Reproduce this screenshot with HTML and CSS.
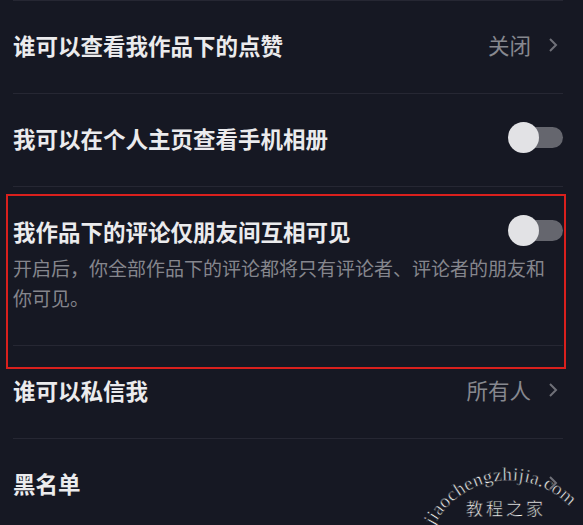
FILE: index.html
```html
<!DOCTYPE html>
<html lang="zh-CN">
<head>
    <meta charset="UTF-8">
    <meta name="viewport" content="width=device-width, initial-scale=1.0">
    <title>隐私设置</title>
    <link rel="stylesheet" href="styles.css">
</head>
<body>
    <div class="settings-list">
        <div class="setting-row">
            <span class="setting-title">谁可以查看我作品下的点赞</span>
            <span class="setting-value">关闭
                <svg class="chevron" viewBox="0 0 10 16"><polyline points="2,2 8,8 2,14"/></svg>
            </span>
        </div>

        <div class="setting-row">
            <span class="setting-title">我可以在个人主页查看手机相册</span>
            <span class="switch"></span>
        </div>

        <div class="setting-row tall">
            <div class="setting-head">
                <span class="setting-title">我作品下的评论仅朋友间互相可见</span>
                <span class="switch"></span>
            </div>
            <p class="setting-desc">开启后，你全部作品下的评论都将只有评论者、评论者的朋友和你可见。</p>
        </div>

        <div class="setting-row">
            <span class="setting-title">谁可以私信我</span>
            <span class="setting-value">所有人
                <svg class="chevron" viewBox="0 0 10 16"><polyline points="2,2 8,8 2,14"/></svg>
            </span>
        </div>

        <div class="setting-row">
            <span class="setting-title">黑名单</span>
            <span class="setting-value">
                <svg class="chevron" viewBox="0 0 10 16"><polyline points="2,2 8,8 2,14"/></svg>
            </span>
        </div>
    </div>

    <!-- annotation box -->
    <div class="highlight-box"></div>

    <!-- watermark -->
    <svg class="watermark" viewBox="0 0 170 80">
        <defs>
            <path id="arc" d="M 14 76 A 84 84 0 0 1 160 70"/>
        </defs>
        <text class="wm-latin"><textPath href="#arc" textLength="160" lengthAdjust="spacing">jiaochengzhijia.com</textPath></text>
        <text class="wm-cn" x="46" y="65">教程之家</text>
    </svg>
</body>
</html>
```

FILE: styles.css
```css
* {
    margin: 0;
    padding: 0;
    box-sizing: border-box;
}

body {
    background: #161823;
    width: 583px;
    height: 525px;
    overflow: hidden;
    position: relative;
    font-family: 'Noto Sans CJK SC', 'Noto Sans', sans-serif;
}

.settings-list {
    padding: 0 20px 0 13px;
}

.setting-row {
    display: flex;
    align-items: center;
    justify-content: space-between;
    height: 93px;
    padding-bottom: 5px;
    border-top: 1px solid #262733;
}

.setting-row.tall {
    display: block;
    height: 159px;
    padding-top: 28px;
    padding-bottom: 0;
}

.setting-head {
    display: flex;
    align-items: center;
    justify-content: space-between;
}

.setting-title {
    color: #ebebed;
    font-size: 22.5px;
    font-weight: 700;
    line-height: 30px;
}

.setting-desc {
    margin-top: 7px;
    color: #85868d;
    font-size: 19px;
    line-height: 30px;
    padding-right: 8px;
}

.setting-value {
    display: flex;
    align-items: center;
    gap: 17px;
    color: #87888f;
    font-size: 21.5px;
    line-height: 30px;
    padding-right: 5px;
}

.chevron {
    width: 10px;
    height: 16px;
    fill: none;
    stroke: #6f7078;
    stroke-width: 2;
}

/* toggle (off state) */
.switch {
    position: relative;
    width: 55px;
    height: 31px;
}

.switch::before {
    content: '';
    position: absolute;
    left: 6px;
    right: 0;
    top: 5px;
    height: 21px;
    border-radius: 11px;
    background: #65666e;
}

.switch::after {
    content: '';
    position: absolute;
    left: 0;
    top: 0;
    width: 31px;
    height: 31px;
    border-radius: 50%;
    background: #e2e2e5;
}

.highlight-box {
    position: absolute;
    left: 6px;
    top: 194px;
    width: 560px;
    height: 175px;
    border: 2px solid #d9201d;
}

.watermark {
    position: absolute;
    left: 420px;
    top: 450px;
    width: 170px;
    height: 80px;
    overflow: visible;
}

.watermark text {
    fill: #f4f4f4;
    stroke: #161823;
    stroke-width: 0.5;
}

.wm-latin {
    font-family: 'Liberation Serif', serif;
    font-size: 19px;
}

.wm-cn {
    font-family: 'Noto Sans CJK SC', sans-serif;
    font-size: 17px;
    letter-spacing: 3px;
}
```
